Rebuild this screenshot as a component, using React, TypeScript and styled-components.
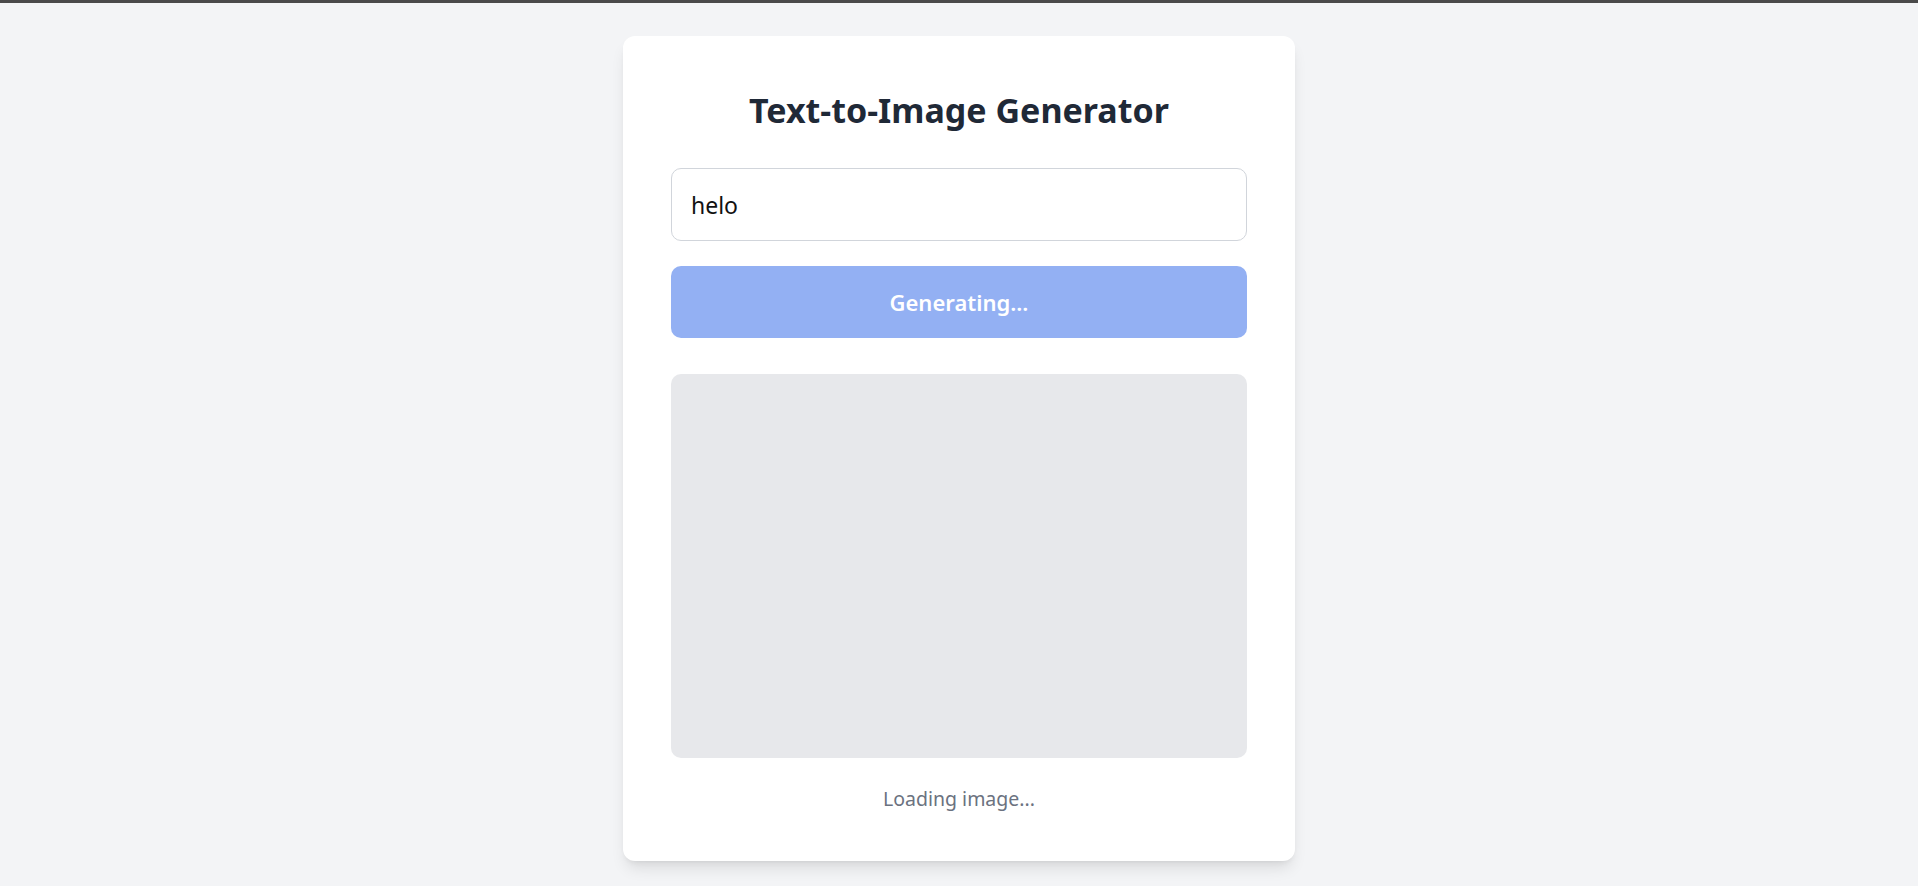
import React from "react";
import styled, { createGlobalStyle } from "styled-components";

const GlobalStyle = createGlobalStyle`
  html, body {
    margin: 0;
    padding: 0;
    background: #f3f4f6;
    font-family: "Noto Sans", "Open Sans", Arial, sans-serif;
  }
  * { box-sizing: border-box; }
`;

const TopBar = styled.div`
  height: 3px;
  background: #4a4a4a;
`;

const Page = styled.main`
  min-height: 883px;
  display: flex;
  justify-content: center;
  align-items: flex-start;
  padding-top: 33px;
`;

const Card = styled.section`
  width: 672px;
  background: #ffffff;
  border-radius: 12px;
  padding: 48px;
  box-shadow: 0 10px 15px -3px rgba(0, 0, 0, 0.1), 0 4px 6px -4px rgba(0, 0, 0, 0.1);
  display: flex;
  flex-direction: column;
`;

const Title = styled.h1`
  margin: 6px 0 38px;
  font-size: 34px;
  line-height: 40px;
  font-weight: 700;
  color: #1f2937;
  text-align: center;
`;

const PromptInput = styled.input`
  width: 100%;
  height: 73px;
  padding: 0 19px;
  border: 1px solid #d1d5db;
  border-radius: 10px;
  font-family: inherit;
  font-size: 23px;
  color: #111111;
  background: #ffffff;
  outline: none;
`;

const GenerateButton = styled.button`
  margin-top: 25px;
  width: 100%;
  height: 72px;
  border: none;
  border-radius: 10px;
  background: #93b0f3;
  color: #ffffff;
  font-family: inherit;
  font-size: 22px;
  font-weight: 600;
  cursor: not-allowed;
`;

const ImagePlaceholder = styled.div`
  margin-top: 36px;
  width: 100%;
  height: 384px;
  border-radius: 10px;
  background: #e7e8eb;
`;

const Status = styled.p`
  margin: 27px 0 0;
  font-size: 19.5px;
  line-height: 28px;
  color: #6b7280;
  text-align: center;
`;

export default function App() {
  return (
    <>
      <GlobalStyle />
      <TopBar />
      <Page>
        <Card>
          <Title>Text-to-Image Generator</Title>
          <PromptInput defaultValue="helo" />
          <GenerateButton disabled>Generating...</GenerateButton>
          <ImagePlaceholder />
          <Status>Loading image...</Status>
        </Card>
      </Page>
    </>
  );
}
